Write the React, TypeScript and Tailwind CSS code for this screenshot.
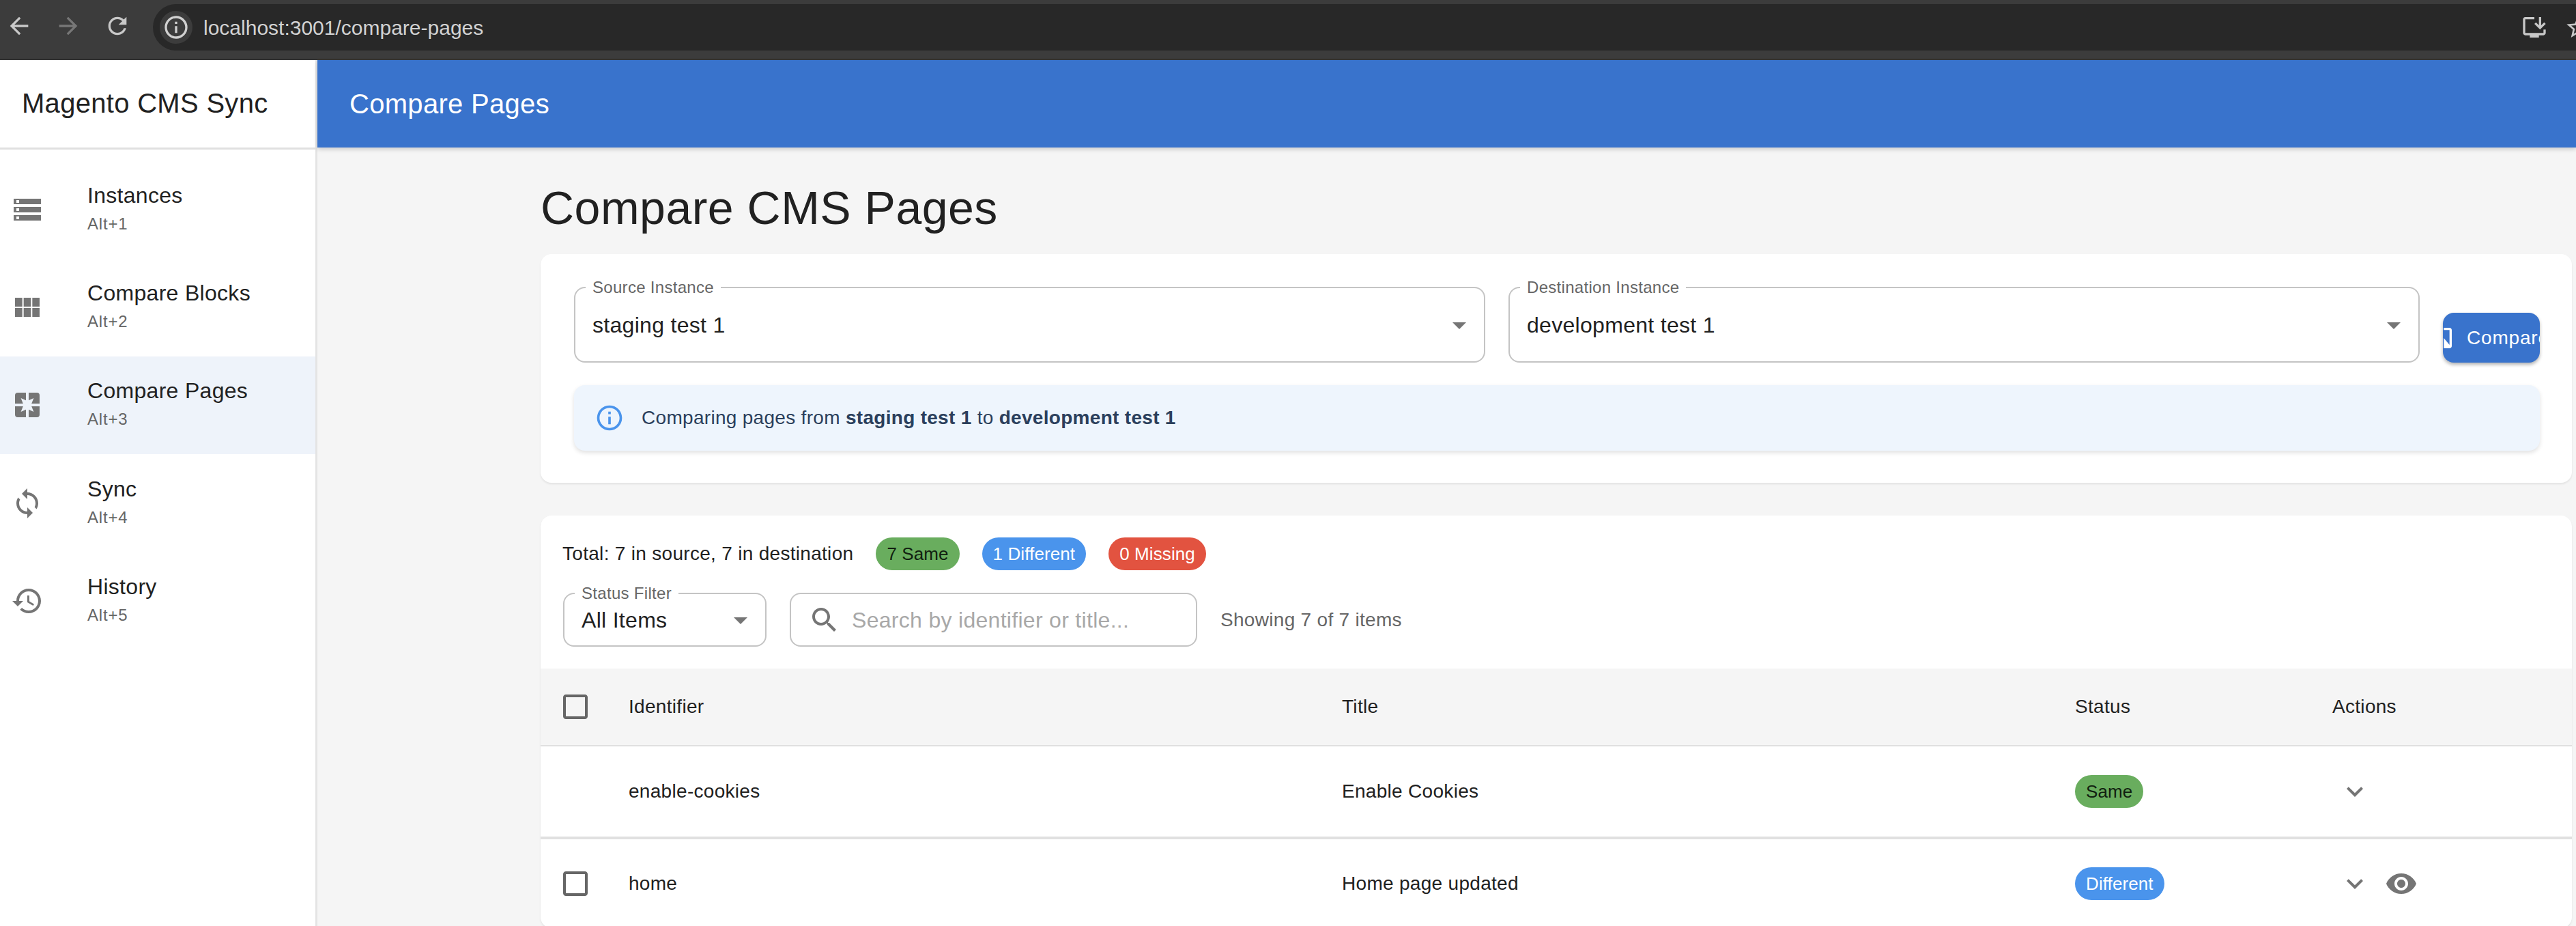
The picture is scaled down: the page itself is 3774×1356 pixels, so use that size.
import { ReactNode } from "react";

const paths = {
  storage:
    "M2 20h20v-4H2v4zm2-3h2v2H4v-2zM2 4v4h20V4H2zm4 3H4V5h2v2zm-4 7h20v-4H2v4zm2-3h2v2H4v-2z",
  blocks:
    "M14.67 5v6.5H9.33V5h5.34zm0 7.5V19H9.33v-6.5h5.34zm1 6.5v-6.5H21V19h-5.33zm0-7.5V5H21v6.5h-5.33zM8.33 5v6.5H3V5h5.33zm0 7.5V19H3v-6.5h5.33z",
  pages:
    "M3 5a2 2 0 0 1 2-2h6v5.6L7.3 7l1.6 4H3zM13 3h6a2 2 0 0 1 2 2v6h-5.9l1.6-4L13 8.6zM3 13h5.9l-1.6 4 3.7-1.6V21H5a2 2 0 0 1-2-2zM13 15.4l3.7 1.6-1.6-4H21v6a2 2 0 0 1-2 2h-6z",
  sync:
    "M12 4V1L8 5l4 4V6c3.31 0 6 2.69 6 6 0 1.01-.25 1.97-.7 2.8l1.46 1.46C19.54 15.03 20 13.57 20 12c0-4.42-3.58-8-8-8zm0 14c-3.31 0-6-2.69-6-6 0-1.01.25-1.97.7-2.8L5.24 7.74C4.46 8.97 4 10.43 4 12c0 4.42 3.58 8 8 8v3l4-4-4-4v3z",
  history:
    "M13 3c-4.97 0-9 4.03-9 9H1l3.89 3.89.07.14L9 12H6c0-3.87 3.13-7 7-7s7 3.13 7 7-3.13 7-7 7c-1.93 0-3.68-.79-4.94-2.06l-1.42 1.42C8.27 19.99 10.51 21 13 21c4.97 0 9-4.03 9-9s-4.03-9-9-9zm-1 5v5l4.28 2.54.72-1.21-3.5-2.08V8H12z",
  info: "M11,9H13V7H11M12,20C7.59,20 4,16.41 4,12C4,7.59 7.59,4 12,4C16.41,4 20,7.59 20,12C20,16.41 16.41,20 12,20M12,2A10,10 0 0,0 2,12A10,10 0 0,0 12,22A10,10 0 0,0 22,12A10,10 0 0,0 12,2M11,17H13V11H11V17Z",
  search:
    "M15.5 14h-.79l-.28-.27C15.41 12.59 16 11.11 16 9.5 16 5.91 13.09 3 9.5 3S3 5.91 3 9.5 5.91 16 9.5 16c1.61 0 3.09-.59 4.23-1.57l.27.28v.79l5 4.99L20.49 19l-4.99-5zm-6 0C7.01 14 5 11.99 5 9.5S7.01 5 9.5 5 14 7.01 14 9.5 11.99 14 9.5 14z",
  checkbox:
    "M19 5v14H5V5h14m0-2H5c-1.1 0-2 .9-2 2v14c0 1.1.9 2 2 2h14c1.1 0 2-.9 2-2V5c0-1.1-.9-2-2-2z",
  eye: "M12 4.5C7 4.5 2.73 7.61 1 12c1.73 4.39 6 7.5 11 7.5s9.27-3.11 11-7.5c-1.73-4.39-6-7.5-11-7.5zM12 17c-2.76 0-5-2.24-5-5s2.24-5 5-5 5 2.24 5 5-2.24 5-5 5zm0-8c-1.66 0-3 1.34-3 3s1.34 3 3 3 3-1.34 3-3-1.34-3-3-3z",
  chevron: "M16.59 8.59 12 13.17 7.41 8.59 6 10l6 6 6-6z",
  dropdown: "M7 10l5 5 5-5z",
  compare:
    "M10 3H5c-1.1 0-2 .9-2 2v14c0 1.1.9 2 2 2h5v2h2V1h-2v2zm0 15H5l5-6v6zm9-15h-5v2h5v13l-5-6v9h5c1.1 0 2-.9 2-2V5c0-1.1-.9-2-2-2z",
  back: "M20 11H7.83l5.59-5.59L12 4l-8 8 8 8 1.41-1.41L7.83 13H20v-2z",
  forward: "M12 4l-1.41 1.41L16.17 11H4v2h12.17l-5.58 5.59L12 20l8-8z",
  reload:
    "M17.65 6.35C16.2 4.9 14.21 4 12 4c-4.42 0-7.99 3.58-7.99 8s3.57 8 7.99 8c3.73 0 6.84-2.55 7.73-6h-2.08c-.82 2.33-3.04 4-5.65 4-3.31 0-6-2.69-6-6s2.69-6 6-6c1.66 0 3.14.69 4.22 1.78L13 11h7V4l-2.35 2.35z",
  install:
    "M20 17H4V5h8V3H4c-1.11 0-2 .89-2 2v12c0 1.1.89 2 2 2h4v2h8v-2h4c1.1 0 2-.9 2-2v-3h-2v3zM17 14l5-5-1.41-1.41L18 10.17V3h-2v7.17l-2.59-2.58L12 9z",
  star: "M22 9.24l-7.19-.62L12 2 9.19 8.63 2 9.24l5.46 4.73L5.82 21 12 17.27 18.18 21l-1.63-7.03L22 9.24zM12 15.4l-3.76 2.27 1-4.28-3.32-2.88 4.38-.38L12 6.1l1.71 4.04 4.38.38-3.32 2.88 1 4.28L12 15.4z",
};

function Icon({ d, className }: { d: string; className: string }) {
  return (
    <svg viewBox="0 0 24 24" className={className}>
      <path d={d} />
    </svg>
  );
}

const navItems = [
  { label: "Instances", shortcut: "Alt+1", icon: paths.storage },
  { label: "Compare Blocks", shortcut: "Alt+2", icon: paths.blocks },
  { label: "Compare Pages", shortcut: "Alt+3", icon: paths.pages, active: true },
  { label: "Sync", shortcut: "Alt+4", icon: paths.sync },
  { label: "History", shortcut: "Alt+5", icon: paths.history },
];

function BrowserBar() {
  return (
    <div className="flex h-[88px] shrink-0 border-b-2 border-[#333333] bg-[#3c3c3c] pt-[6px] pb-3">
      <div className="flex w-[224px] shrink-0 items-center pl-[8px] pb-[4px]">
        <Icon d={paths.back} className="h-10 w-10 fill-[#c8c8c8]" />
        <Icon d={paths.forward} className="ml-8 h-10 w-10 fill-[#777777]" />
        <Icon d={paths.reload} className="ml-8 h-10 w-10 fill-[#c8c8c8]" />
      </div>
      <div className="flex flex-1 items-center overflow-hidden rounded-l-[34px] bg-[#282828] pl-[10px]">
        <div className="flex h-12 w-12 items-center justify-center rounded-full bg-[#3c3c3c]">
          <Icon d={paths.info} className="h-10 w-10 fill-[#d0d0d0]" />
        </div>
        <span className="ml-4 flex-1 text-[30px] tracking-normal text-[#d2d2d2]">localhost:3001/compare-pages</span>
        <Icon d={paths.install} className="h-10 w-10 shrink-0 fill-[#c8c8c8]" />
        <Icon d={paths.star} className="mr-[-23px] ml-6 h-10 w-10 shrink-0 fill-[#c8c8c8]" />
      </div>
    </div>
  );
}

function Sidebar() {
  return (
    <aside className="flex w-[465px] shrink-0 flex-col border-r-[3px] border-[#e4e4e4] bg-white">
      <div className="flex h-[131px] shrink-0 items-center border-b-[3px] border-[#e0e0e0] pb-[3px] pl-[32px] text-[40px] text-[#212121]">
        Magento CMS Sync
      </div>
      <nav className="pt-4">
        {navItems.map((item) => (
          <div
            key={item.label}
            className={`flex h-[143.4px] items-center pl-4 ${item.active ? "bg-[#eef3fa]" : ""}`}
          >
            <div className="w-[112px] shrink-0">
              <Icon d={item.icon} className="h-12 w-12 fill-[#757575]" />
            </div>
            <div className="pb-[4px]">
              <div className="text-[32px] leading-[46px] text-[#212121]">{item.label}</div>
              <div className="text-[24px] leading-[38px] tracking-[0.8px] text-[#666666]">{item.shortcut}</div>
            </div>
          </div>
        ))}
      </nav>
    </aside>
  );
}

function OutlinedField({
  label,
  className,
  children,
}: {
  label?: string;
  className: string;
  children: ReactNode;
}) {
  return (
    <div className={`relative rounded-2xl border-2 border-[#c4c4c4] bg-white ${className}`}>
      {label && (
        <span className="absolute top-[-17px] left-[15px] bg-white px-[10px] text-[24px] leading-[32px] text-[#666666]">
          {label}
        </span>
      )}
      {children}
    </div>
  );
}

function SelectField({ label, value, className }: { label: string; value: string; className: string }) {
  return (
    <OutlinedField label={label} className={`flex items-center pl-[25px] ${className}`}>
      <span className="flex-1 text-[32px] text-[#212121]">{value}</span>
      <Icon d={paths.dropdown} className="mr-3 h-12 w-12 shrink-0 fill-[#757575]" />
    </OutlinedField>
  );
}

function Chip({ label, className }: { label: string; className: string }) {
  return (
    <span className={`inline-flex h-12 items-center rounded-3xl px-4 text-[26px] tracking-[0.1px] ${className}`}>
      {label}
    </span>
  );
}

function TableSection() {
  const cell = "text-[28px] font-normal text-[#212121] text-left p-0";
  return (
    <table className="w-full table-fixed border-collapse">
      <thead>
        <tr className="h-[113px] border-b-2 border-[#e0e0e0] bg-[#f5f5f5]">
          <th className="w-[129px] pl-[27px] text-left">
            <Icon d={paths.checkbox} className="h-12 w-12 fill-[#666666]" />
          </th>
          <th className={`w-[1045px] ${cell}`}>Identifier</th>
          <th className={`w-[1074px] ${cell}`}>Title</th>
          <th className={`w-[377px] ${cell}`}>Status</th>
          <th className={cell}>Actions</th>
        </tr>
      </thead>
      <tbody>
        <tr className="h-[135px] border-b-4 border-[#e0e0e0]">
          <td />
          <td className={cell}>enable-cookies</td>
          <td className={cell}>Enable Cookies</td>
          <td className={cell}>
            <Chip label="Same" className="bg-[#69ad5e] text-[#111f10]" />
          </td>
          <td className={cell}>
            <Icon d={paths.chevron} className="ml-[9px] h-12 w-12 fill-[#757575]" />
          </td>
        </tr>
        <tr className="h-[132px]">
          <td className="pl-[27px]">
            <Icon d={paths.checkbox} className="h-12 w-12 fill-[#666666]" />
          </td>
          <td className={cell}>home</td>
          <td className={cell}>Home page updated</td>
          <td className={cell}>
            <Chip label="Different" className="bg-[#4a94ec] text-white" />
          </td>
          <td className={cell}>
            <div className="flex items-center gap-[20px]">
              <Icon d={paths.chevron} className="ml-[9px] h-12 w-12 fill-[#757575]" />
              <Icon d={paths.eye} className="h-12 w-12 fill-[#757575]" />
            </div>
          </td>
        </tr>
      </tbody>
    </table>
  );
}

export default function App() {
  return (
    <div
      className="flex h-[1356px] w-[3774px] flex-col overflow-hidden bg-[#f5f5f5] tracking-[0.3px]"
      style={{ fontFamily: '"Liberation Sans", Arial, sans-serif' }}
    >
      <BrowserBar />
      <div className="flex min-h-0 flex-1">
        <Sidebar />
        <div className="flex min-w-0 flex-1 flex-col">
          <header className="flex h-[128px] shrink-0 items-center bg-[#3973cc] pl-[47px] text-[40px] text-white shadow-[0_3px_6px_rgba(0,0,0,0.16)]">
            Compare Pages
          </header>
          <main className="pt-[48px] pr-[6px] pl-[327px]">
            <h1 className="mb-[28px] text-[68px] leading-[80px] font-normal tracking-[0.5px] text-[#212121]">
              Compare CMS Pages
            </h1>

            <section className="rounded-2xl bg-white pt-[48px] pr-[47px] pb-[47px] pl-[49px] shadow-[0_2px_3px_rgba(0,0,0,0.08)]">
              <div className="flex items-end gap-[34px]">
                <SelectField label="Source Instance" value="staging test 1" className="h-[111px] flex-1" />
                <SelectField label="Destination Instance" value="development test 1" className="h-[111px] flex-1" />
                <button className="flex h-[73px] w-[142px] shrink-0 items-center overflow-hidden rounded-2xl bg-[#3973cc] text-[28px] tracking-[0.8px] whitespace-nowrap text-white shadow-[0_3px_5px_rgba(0,0,0,0.3)]">
                  <Icon d={paths.compare} className="ml-[-22px] h-10 w-10 shrink-0 fill-white" />
                  <span className="ml-[17px]">Compare</span>
                </button>
              </div>
              <div className="mt-[33px] flex h-[96px] items-center rounded-2xl bg-[#eef5fd] pl-[30px] text-[28px] text-[#2b3f5c] shadow-[0_3px_6px_rgba(0,0,0,0.12)]">
                <Icon d={paths.info} className="h-11 w-11 shrink-0 fill-[#4a94ec]" />
                <span className="ml-[25px]">
                  Comparing pages from <strong>staging test 1</strong> to <strong>development test 1</strong>
                </span>
              </div>
            </section>

            <section className="mt-[48px] rounded-2xl bg-white pt-[32px] shadow-[0_2px_3px_rgba(0,0,0,0.08)]">
              <div className="flex items-center gap-[33px] pl-[32px]">
                <span className="text-[28px] text-[#212121]">Total: 7 in source, 7 in destination</span>
                <Chip label="7 Same" className="bg-[#69ad5e] text-[#111f10]" />
                <Chip label="1 Different" className="bg-[#4a94ec] text-white" />
                <Chip label="0 Missing" className="bg-[#e25340] text-white" />
              </div>
              <div className="mt-[33px] flex items-center gap-[34px] pl-[33px]">
                <SelectField label="Status Filter" value="All Items" className="h-[79px] w-[298px]" />
                <OutlinedField className="flex h-[79px] w-[597px] items-center pl-[25px]">
                  <Icon d={paths.search} className="h-12 w-12 shrink-0 fill-[#757575]" />
                  <span className="ml-[16px] text-[32px] text-[#a8a8a8]">Search by identifier or title...</span>
                </OutlinedField>
                <span className="text-[28px] text-[#666666]">Showing 7 of 7 items</span>
              </div>
              <div className="mt-[32px]">
                <TableSection />
              </div>
            </section>
          </main>
        </div>
      </div>
    </div>
  );
}
